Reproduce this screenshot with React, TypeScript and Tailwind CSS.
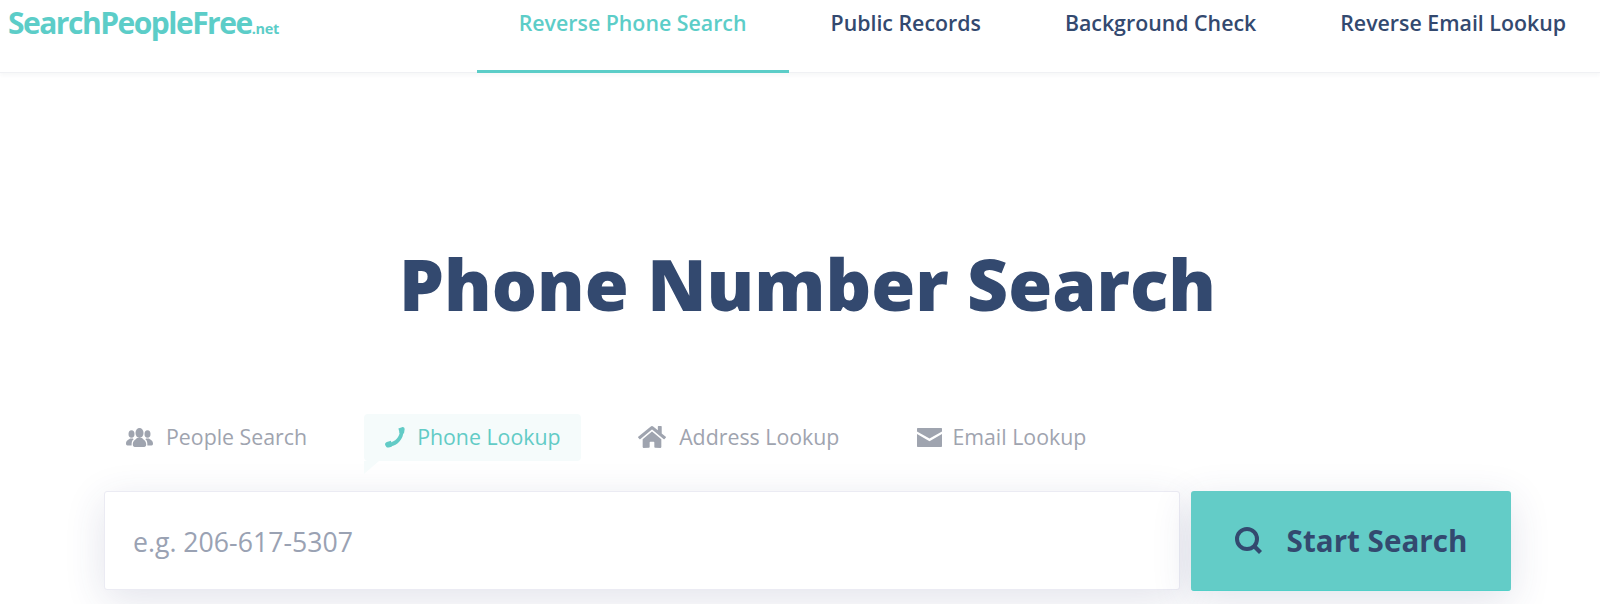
import React from 'react';
import { FaHome } from 'react-icons/fa';

const navItems = [
  { label: 'Reverse Phone Search', active: true },
  { label: 'Public Records', active: false },
  { label: 'Background Check', active: false },
  { label: 'Reverse Email Lookup', active: false },
];

const PeopleIcon = () => (
  <svg width="27" height="19" viewBox="0 0 27 19" fill="#9fa4af" className="shrink-0">
    <ellipse cx="5.5" cy="6" rx="3" ry="3.8" />
    <ellipse cx="21.5" cy="6" rx="3" ry="3.8" />
    <path d="M0 15.5C0 12.5 3 11.5 4 10.5H7L7.5 11.5C6 12.5 5.6 14 5.6 17.5H1.5C0.5 17.5 0 16.5 0 15.5Z" />
    <path d="M27 15.5C27 12.5 24 11.5 23 10.5H20L19.5 11.5C21 12.5 21.4 14 21.4 17.5H25.5C26.5 17.5 27 16.5 27 15.5Z" />
    <ellipse cx="13.5" cy="5" rx="4" ry="5" />
    <path d="M6.8 16.5C6.8 12.5 10 11.5 11 10H16C17 11.5 20.2 12.5 20.2 16.5C20.2 18 19.4 19 18.2 19H8.8C7.6 19 6.8 18 6.8 16.5Z" />
  </svg>
);

const PhoneIcon = () => (
  <svg width="20" height="21" viewBox="0 0 20 21" fill="#62cbc6" className="shrink-0">
    <path d="M14.6 4.5C15 9.5 10 15 4.4 15.6L5.6 19.4C12.6 19 18.6 11.5 18.4 4.6Z" />
    <path d="M13.4 1.6L17 0.2C18.6-0.2 19.8 1 19.6 2.6L19 6.6L14.6 6Z" />
    <path d="M6 13.8L1.8 15C0.2 15.6-0.4 17 0.4 18.4L1.4 20C2.4 21 4.6 20.4 6.8 19.4Z" />
  </svg>
);

const MailIcon = () => (
  <svg width="25" height="19" viewBox="0 0 25 19" fill="#9fa4af" className="shrink-0">
    <path d="M1 0H24C24.6 0 25 0.4 25 1V3.4L12.5 10.6L0 3.4V1C0 0.4 0.4 0 1 0Z" />
    <path d="M0 6L12.5 13.2L25 6V18C25 18.6 24.6 19 24 19H1C0.4 19 0 18.6 0 18Z" />
  </svg>
);

const SearchIcon = () => (
  <svg width="27" height="27" viewBox="0 0 27 27" className="shrink-0">
    <circle cx="12" cy="12" r="10" fill="none" stroke="#33496f" strokeWidth="4" />
    <path d="M19 19L25.5 25.5" fill="none" stroke="#33496f" strokeWidth="4.2" />
  </svg>
);

export default function App() {
  return (
    <div className="h-[604px] overflow-hidden bg-white font-['Open_Sans',sans-serif]">
      <header className="flex h-[73px] justify-between border-b border-[#f0f1f4] shadow-[0_2px_4px_rgba(60,70,100,0.05)]">
        <div className="flex h-[50px] items-baseline pl-2 font-bold text-[#5ccdc8]">
          <span className="text-[30px] tracking-[-1.5px]">SearchPeopleFree</span>
          <span className="text-[14.5px] tracking-[-0.3px]">.net</span>
        </div>
        <nav className="-mr-[8px] flex">
          {navItems.map((item) => (
            <a
              key={item.label}
              className={`-mb-px flex h-[73px] items-start border-b-[3px] px-[42px] pt-[7px] text-[21.33px] font-semibold ${
                item.active ? 'border-[#5ccdc8] text-[#5ccdc8]' : 'border-transparent text-[#33496f]'
              }`}
            >
              {item.label}
            </a>
          ))}
        </nav>
      </header>

      <h1 className="mt-[162px] pl-[15px] text-center text-[71.2px] leading-[98px] font-extrabold text-[#33496f]">
        Phone Number Search
      </h1>

      <div className="mt-[81px] ml-[104px] w-[1407px] pl-[22px] text-[21.33px] text-[#9fa4af]">
        <div className="flex h-[47px] items-center">
          <div className="flex items-center gap-[13px]">
            <PeopleIcon />
            <span className="-mt-[2px]">People Search</span>
          </div>
          <div className="relative ml-[57px] flex h-[47px] w-[217px] items-center gap-[12px] rounded-[4px] bg-[#f5fbfb] pl-[21px] text-[#62cbc6]">
            <PhoneIcon />
            <span className="-mt-[2px]">Phone Lookup</span>
            <span className="absolute top-[47px] left-0 h-0 w-0 border-t-[13px] border-r-[15px] border-t-[#f5fbfb] border-r-transparent" />
          </div>
          <div className="ml-[57px] flex items-center gap-[13px]">
            <FaHome size={28} />
            <span className="-mt-[2px]">Address Lookup</span>
          </div>
          <div className="ml-[78px] flex items-center gap-[10px]">
            <MailIcon />
            <span className="-mt-[2px]">Email Lookup</span>
          </div>
        </div>

        <div className="mt-[30px] -ml-[22px] flex gap-[11px]">
          <div className="flex h-[99px] w-[1076px] items-center rounded-[3px] border border-[#ebebf3] bg-white pt-[2px] pl-[28px] text-[26.67px] text-[#9aa2b3] shadow-[0_10px_40px_rgba(50,60,110,0.14)]">
            e.g. 206-617-5307
          </div>
          <button className="flex h-[100px] w-[320px] items-center justify-center gap-[25px] rounded-[3px] border-b border-[#52cfc8] bg-[#63ccc7] text-[29.6px] font-bold text-[#33496f] shadow-[0_10px_40px_rgba(50,60,110,0.14)]">
            <SearchIcon />
            <span className="pt-[2px]">Start Search</span>
          </button>
        </div>
      </div>
    </div>
  );
}
